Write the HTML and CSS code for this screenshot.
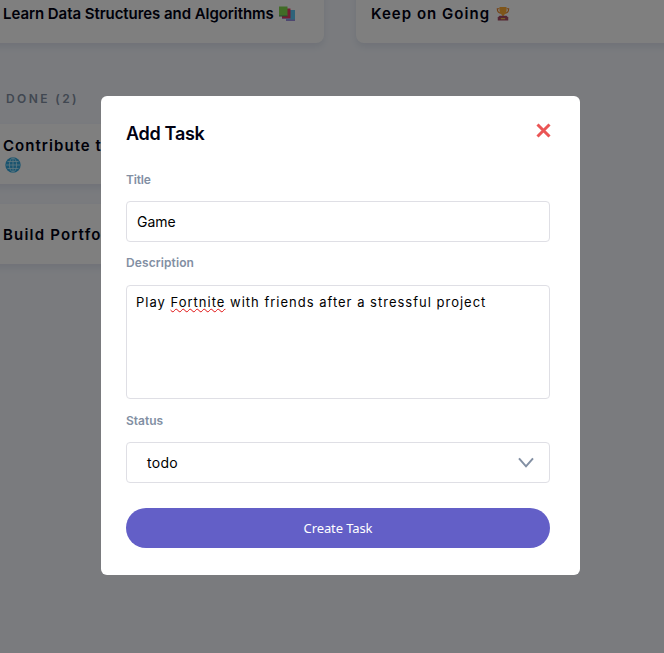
FILE: index.html
```html
<!DOCTYPE html>
<html lang="en">
<head>
<meta charset="utf-8">
<title>Add Task</title>
<link rel="stylesheet" href="styles.css">
</head>
<body>
<main class="board">
  <div class="column">
    <article class="card card-cut"><h3 class="name tight">Learn Data Structures and Algorithms</h3>
      <svg class="emoji" viewBox="0 0 16 16"><path fill="#5cc6f5" d="M7 4h9v10H7z"/><path fill="#9c8fe0" d="M7 13.500h9V15H7z"/><path fill="#e83a62" d="M3 2.500h8.500V12H3z"/><path fill="#c080c8" d="M3 12h8.500v1H3z"/><path fill="#83d94e" d="M0 .5h8.500V10H0z"/><path fill="#488f63" d="M0 9.500h8.500v1H0z"/></svg>
    </article>
    <h2 class="heading">DONE (2)</h2>
    <article class="card card-tall"><h3 class="name">Contribute t</h3>
      <svg class="emoji globe" viewBox="0 0 16 16"><circle cx="8" cy="8" r="7.7" fill="#35a9df"/><g fill="none" stroke="#c2f0ff" stroke-width=".8"><ellipse cx="8" cy="8" rx="3.600" ry="7"/><path d="M8 1v14M1 8h14M2.500 4.500h11M2.500 11.500h11"/></g></svg>
    </article>
    <article class="card card-short"><h3 class="name portfolio">Build Portfo</h3></article>
  </div>
  <div class="column">
    <article class="card card-cut"><h3 class="name keep">Keep on Going</h3>
      <svg class="emoji trophy" viewBox="0 0 16 16"><path d="M4 2H1.500q0 4.500 4 5M12 2h2.500q0 4.500-4 5" fill="none" stroke="#e9852c" stroke-width="1.300"/><path fill="#ffac35" d="M4 0h8v4q0 4-3 5v2H7V9Q4 8 4 4z"/><path fill="#a84b64" d="M4 10h8l2 2v3.500H2V12z"/><path fill="#f8b850" d="M5.500 12.500h5V14h-5z"/></svg>
    </article>
  </div>
</main>
<div class="overlay">
  <form class="modal">
    <header class="top"><h1 class="title">Add Task</h1>
      <svg class="close" viewBox="0 0 15 15"><path d="M1.500 1.500l12 12M13.500 1.500l-12 12"/></svg>
    </header>
    <label class="label l-title">Title</label>
    <div class="field"><span class="game">Game</span></div>
    <label class="label l-desc">Description</label>
    <div class="field area"><p class="desc">Play <span class="typo">Fortnite</span> with friends after a stressful project</p></div>
    <label class="label l-status">Status</label>
    <div class="field select"><span class="todo">todo</span>
      <svg class="chevron" viewBox="0 0 16 11"><path d="M1 1.300l7 8 7-8"/></svg>
    </div>
    <button class="submit" type="button">Create Task</button>
  </form>
</div>
</body>
</html>
```
FILE: styles.css
```css
* { box-sizing: border-box; margin: 0; }
body { width: 664px; height: 653px; overflow: hidden; background: #f4f7fd; font-family: Inter, "Open Sans", sans-serif; color: #000112; }
.board { display: grid; grid-template-columns: 324px 340px; column-gap: 32px; height: 653px; overflow: hidden; }
.card { display: flex; align-items: center; padding-left: 15px; height: 60px; background: #fff; border-radius: 8px; box-shadow: 0 4px 6px rgba(54, 78, 126, .1); }
.column:first-child .card { margin-left: -12px; }
.card-cut { height: 59px; margin-top: -16px; }
.name { font-size: 15px; line-height: 19px; font-weight: 600; letter-spacing: 1.05px; white-space: nowrap; }
.tight { letter-spacing: -.06px; }
.keep { letter-spacing: 1.02px; }
.portfolio { letter-spacing: 1.18px; }
.emoji { width: 16px; height: 16px; margin-left: 5px; flex: none; }
.trophy { margin-left: 6px; width: 14px; }
.heading { margin: 48px 0 18px 6px; font-size: 12px; line-height: 15px; font-weight: 600; letter-spacing: 2.4px; color: #828fa3; }
.card-tall { flex-direction: column; align-items: flex-start; justify-content: center; margin-bottom: 20px; }
.globe { margin: 2px 0 0 2px; }
.overlay { position: absolute; inset: 0; padding: 96px 0 0 101px; background: rgba(0, 0, 0, .5); }
.modal { width: 479px; height: 479px; padding: 25px 30px 27px 25px; background: #fff; border-radius: 6px; }
.top { display: flex; justify-content: space-between; height: 51px; }
.title { font-size: 18px; line-height: 26px; font-weight: 600; letter-spacing: -.3px; }
.close { width: 15px; height: 15px; margin: 2px -1px 0 0; fill: none; stroke: #ea5555; stroke-width: 3; }
.label { display: block; font-size: 12px; line-height: 16px; font-weight: 600; color: #828fa3; }
.field { display: flex; align-items: center; height: 41px; margin: 14px 0 13px; padding: 0 10px; border: 1px solid #dfdfe5; border-radius: 4px; font-size: 14px; color: #000; }
.l-title { letter-spacing: -.2px; }
.l-title + .field { margin-top: 13px; }
.l-desc { letter-spacing: .1px; }
.area { align-items: flex-start; height: 114px; padding: 7px 9px 0; margin-bottom: 14px; }
.desc { font-size: 13px; line-height: 18px; letter-spacing: 1px; white-space: nowrap; }
.typo { text-decoration: underline wavy #e01010 1px; text-underline-offset: 1px; }
.select { justify-content: space-between; padding: 0 15px 0 20px; margin-top: 13px; margin-bottom: 25px; }
.todo { letter-spacing: .3px; }
.chevron { width: 16px; height: 11px; fill: none; stroke: #828fa3; stroke-width: 2; }
.submit { display: block; width: 424px; height: 40px; border: 0; border-radius: 20px; background: #635fc7; color: #fff; font: 13px "Noto Sans", sans-serif; letter-spacing: -.1px; }
```
